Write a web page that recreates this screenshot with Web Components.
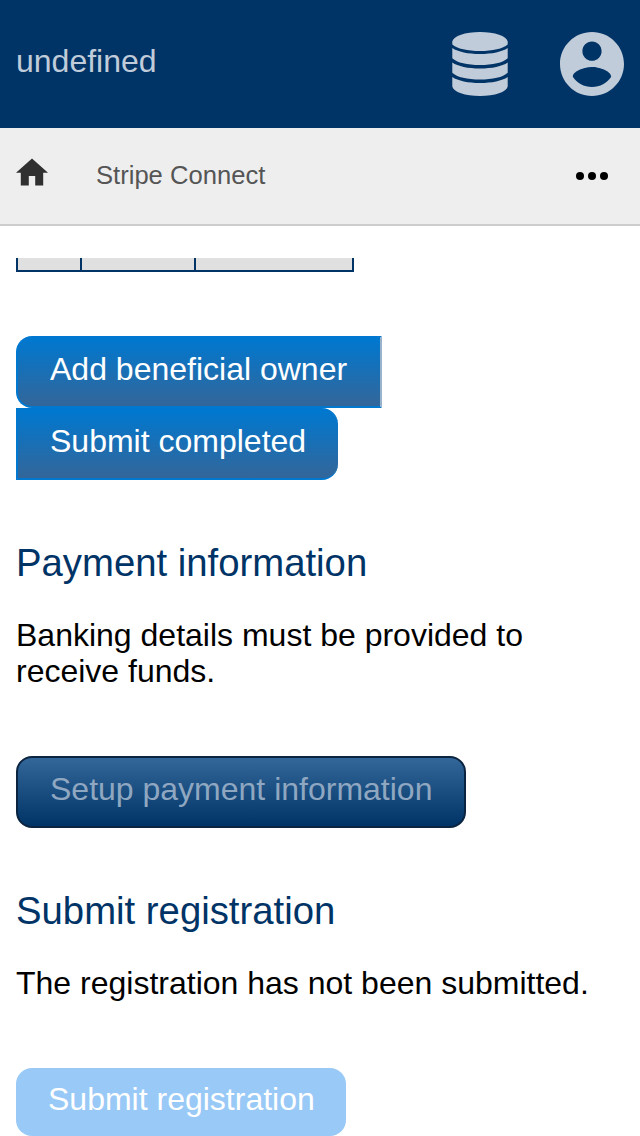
<!DOCTYPE html>
<html lang="en">
<head>
<meta charset="utf-8">
<title>Stripe Connect</title>
<style>
html, body { margin: 0; height: 100%; overflow: hidden; background: #fff; }
body { font-family: "Liberation Sans", Arial, sans-serif; font-size: 32px; line-height: 36px; color: #000; }
</style>
</head>
<body>
<stripe-page></stripe-page>
<script>
function define(name, html) {
  const template = document.createElement('template');
  template.innerHTML = html;
  customElements.define(name, class extends HTMLElement {
    constructor() {
      super();
      this.attachShadow({ mode: 'open' }).append(template.content.cloneNode(true));
    }
  });
}

define('app-header', `
<style>
:host { display: flex; flex: none; box-sizing: border-box; height: 128px; padding: 0 16px; align-items: center; background: #003366; color: #c0ccd9; }
.title { flex: 1; margin-top: -6px; }
svg { display: block; fill: #c0ccd9; }
.db { margin-right: 52px; }
</style>
<div class="title"><slot></slot></div>
<svg class="db" width="56" height="64" viewBox="0 0 56 64">
<path d="M0.3 9.5C1.5 4 13 0 28 0S54.500 4 55.700 9.500V12.500C51 16.700 40.500 19 28 19S5 16.700 0.300 12.500Z"/>
<path d="M0.300 16C6 19.900 16 22 28 22S50 19.900 55.700 16V26.200C51 30.700 40.500 33 28 33S5 30.700 0.300 26.200Z"/>
<path d="M0.300 30.500C6 34.400 16 36.500 28 36.500S50 34.400 55.700 30.500V40.700C51 45.200 40.500 47.500 28 47.500S5 45.200 0.300 40.700Z"/>
<path d="M0.300 45C6 48.900 16 51 28 51S50 48.900 55.700 45V54.500C54.500 60 43 64 28 64S1.500 60 0.300 54.500Z"/>
</svg>
<svg width="64" height="64" viewBox="2 2 20 20"><path d="M12 2C6.480 2 2 6.480 2 12s4.480 10 10 10 10-4.480 10-10S17.520 2 12 2zm0 3c1.660 0 3 1.340 3 3s-1.340 3-3 3-3-1.340-3-3 1.340-3 3-3zm0 14.200c-2.500 0-4.710-1.280-6-3.220.03-1.990 4-3.080 6-3.080 1.990 0 5.970 1.090 6 3.080-1.290 1.940-3.500 3.220-6 3.220z"/></svg>`);

define('bread-crumb', `
<style>
:host { display: flex; flex: none; box-sizing: border-box; height: 98px; padding: 0 32px 0 16px; align-items: center; background: #eee; border-bottom: 2px solid #ccc; font-size: 25.6px; line-height: 30px; color: #555; }
svg { display: block; }
.home { margin: -8px 48px 0 0; fill: #303030; }
.label { flex: 1; margin-top: -2px; }
</style>
<svg class="home" width="32" height="28" viewBox="2 2.750 20 17.500"><path d="M10 20v-6h4v6h5v-8h3L12 3 2 12h3v8z"/></svg>
<div class="label"><slot></slot></div>
<svg width="32" height="8" viewBox="0 0 32 8"><circle cx="4" cy="4" r="4"/><circle cx="16" cy="4" r="4"/><circle cx="28" cy="4" r="4"/></svg>`);

define('owner-table', `
<style>
:host { display: grid; grid-template-columns: 64px 114px 160px; width: 338px; height: 14px; }
i { background: #e0e0e0; border: solid #003366; border-width: 0 0 2px 2px; }
i:last-child { border-right-width: 2px; }
</style><i></i><i></i><i></i>`);

define('action-button', `
<style>
:host { display: block; line-height: 36px; }
button { display: block; box-sizing: border-box; height: 72px; margin: 0; padding: 13px 32px 19px; border: 2px solid #0078d0; border-radius: 16px; font: inherit; color: #fff; text-align: left; white-space: nowrap; background: linear-gradient(#0078d0, #336699); }
:host([kind=first]) button { width: 366px; border-radius: 16px 0 0 16px; border-right-color: #99b3cc; }
:host([kind=last]) button { width: 322px; border-right-width: 0; border-radius: 0 16px 16px 0; }
:host([kind=setup]) button { width: 450px; color: #8fa7c0; border-color: #0b2440; background: linear-gradient(#336699, #003366); }
:host([kind=disabled]) button { width: 330px; height: 68px; border: 0; background: #99c9f6; }
</style>
<button type="button"><slot></slot></button>`);

define('page-section', `
<style>
:host { display: block; margin-top: 60px; }
h2 { margin: 0; font-size: 38.3px; line-height: 46px; font-weight: 400; color: #003366; }
p { margin: 31px 0 67px; }
</style>
<h2><slot name="title"></slot></h2>
<p><slot name="text"></slot></p>
<slot></slot>`);

define('stripe-page', `
<style>
:host { display: flex; flex-direction: column; width: 640px; height: 1136px; overflow: hidden; }
main { padding: 32px 16px 0; }
.group { margin-top: 64px; }
</style>
<app-header>undefined</app-header>
<bread-crumb>Stripe Connect</bread-crumb>
<main>
<owner-table></owner-table>
<div class="group">
<action-button kind="first">Add beneficial owner</action-button>
<action-button kind="last">Submit completed</action-button>
</div>
<page-section>
<span slot="title">Payment information</span>
<span slot="text">Banking details must be provided to receive funds.</span>
<action-button kind="setup">Setup payment information</action-button>
</page-section>
<page-section>
<span slot="title">Submit registration</span>
<span slot="text">The registration has not been submitted.</span>
<action-button kind="disabled">Submit registration</action-button>
</page-section>
</main>`);
</script>
</body>
</html>
